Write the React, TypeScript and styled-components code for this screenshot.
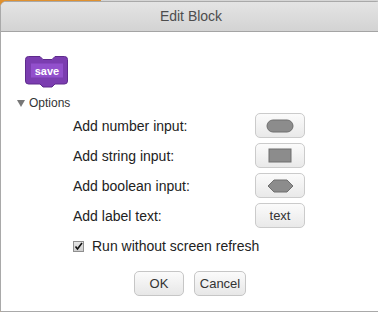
import { FC, Fragment } from "react"
import styled, { createGlobalStyle } from "styled-components"

const GlobalStyle = createGlobalStyle`
  html, body {
    margin: 0;
    padding: 0;
    width: 378px;
    height: 312px;
    overflow: hidden;
    background: linear-gradient(to right, #e0912f 0, #e0912f 101px, #d6d6d6 101px);
    font-family: "Liberation Sans", Arial, sans-serif;
  }
`

const SDialog = styled.div`
  box-sizing: border-box;
  width: 382px;
  height: 311px;
  margin-top: 1px;
  background: #fff;
  border: 1px solid #a9a9a9;
  border-radius: 6px 6px 0 0;
  display: flex;
  flex-direction: column;
  overflow: hidden;
`

const STitle = styled.div`
  height: 30px;
  flex: none;
  display: flex;
  align-items: center;
  justify-content: center;
  background: linear-gradient(#e4e4e4, #d3d3d3);
  border-bottom: 1px solid #a4a4a4;
  color: #4d4d4d;
  font-size: 14px;
  padding-bottom: 2px;
  box-sizing: border-box;
`

const SBody = styled.div`
  flex: 1;
  display: flex;
  flex-direction: column;
  padding: 23px 0 0 23px;
`

const SOptions = styled.div`
  display: flex;
  align-items: center;
  gap: 4px;
  margin: 8px 0 0 -7px;
  font-size: 12px;
  color: #333;
  svg {
    width: 8px;
    height: 7px;
  }
`

const SGrid = styled.div`
  display: grid;
  grid-template-columns: 182px 50px;
  grid-auto-rows: 25px;
  row-gap: 5px;
  align-items: center;
  margin: 3px 0 0 49px;
  font-size: 14px;
  color: #222;
`

const SAddButton = styled.div`
  box-sizing: border-box;
  width: 50px;
  height: 25px;
  border: 1px solid #cbcbcb;
  border-radius: 5px;
  background: linear-gradient(#fbfbfb, #e9e9e9);
  display: flex;
  align-items: center;
  justify-content: center;
  font-size: 13px;
  color: #333;
`

const SCheckRow = styled.label`
  display: flex;
  align-items: center;
  gap: 8px;
  margin: 10px 0 0 49px;
  font-size: 14px;
  color: #222;
`

const SCheckBox = styled.span`
  box-sizing: border-box;
  width: 11px;
  height: 11px;
  border: 1px solid #8f8f8f;
  background: linear-gradient(#e6e6e6, #cfcfcf);
  display: flex;
  align-items: center;
  justify-content: center;
`

const SFooter = styled.div`
  display: flex;
  gap: 10px;
  margin: 17px 0 0 110px;
`

const SButton = styled.div<{ $w: number }>`
  box-sizing: border-box;
  width: ${(p) => p.$w}px;
  height: 25px;
  border: 1px solid #c6c6c6;
  border-radius: 5px;
  background: linear-gradient(#fbfbfb, #e7e7e7);
  display: flex;
  align-items: center;
  justify-content: center;
  font-size: 13px;
  color: #333;
`

const SaveBlock: FC = () => (
  <svg width="46" height="33" viewBox="0 0 46 33">
    <path
      d="M1.5 4.5 Q1.5 1.5 4.5 1.5 H16 L19 4.5 H28 L31 1.5 H40.5 Q43.5 1.5 43.5 4.5 V26 Q43.5 29 40.5 29 H31 L28 32 H19 L16 29 H4.5 Q1.5 29 1.5 26 Z"
      fill="#7b3db0"
      stroke="#5e2b8c"
      strokeWidth="1"
    />
    <rect x="7" y="8.5" width="32" height="14" fill="#9250cc" />
    <text x="23" y="19.5" textAnchor="middle" fill="#fff" fontSize="11" fontWeight="bold" fontFamily="Liberation Sans, Arial, sans-serif">
      save
    </text>
  </svg>
)

const NumberIcon: FC = () => (
  <svg width="28" height="14" viewBox="0 0 28 14">
    <rect x="1" y="1" width="26" height="12" rx="6" fill="#8c8c8c" stroke="#6f6f6f" />
  </svg>
)

const StringIcon: FC = () => (
  <svg width="24" height="15" viewBox="0 0 24 15">
    <rect x="1" y="1" width="22" height="13" fill="#8c8c8c" stroke="#6f6f6f" />
  </svg>
)

const BoolIcon: FC = () => (
  <svg width="27" height="14" viewBox="0 0 27 14">
    <path d="M1 7 L7 1 H20 L26 7 L20 13 H7 Z" fill="#8c8c8c" stroke="#6f6f6f" />
  </svg>
)

const rows = [
  { label: "Add number input:", icon: <NumberIcon /> },
  { label: "Add string input:", icon: <StringIcon /> },
  { label: "Add boolean input:", icon: <BoolIcon /> },
  { label: "Add label text:", icon: "text" },
]

export default function App() {
  return (
    <>
      <GlobalStyle />
      <SDialog>
        <STitle>Edit Block</STitle>
        <SBody>
          <SaveBlock />
          <SOptions>
            <svg viewBox="0 0 8 7">
              <path d="M0 0 H8 L4 7 Z" fill="#777" />
            </svg>
            Options
          </SOptions>
          <SGrid>
            {rows.map((r) => (
              <Fragment key={r.label}>
                <span>{r.label}</span>
                <SAddButton>{r.icon}</SAddButton>
              </Fragment>
            ))}
          </SGrid>
          <SCheckRow>
            <SCheckBox>
              <svg width="9" height="9" viewBox="0 0 9 9">
                <path d="M1.5 4.5 L3.5 7 L8 1" fill="none" stroke="#111" strokeWidth="1.6" />
              </svg>
            </SCheckBox>
            Run without screen refresh
          </SCheckRow>
          <SFooter>
            <SButton $w={50}>OK</SButton>
            <SButton $w={52}>Cancel</SButton>
          </SFooter>
        </SBody>
      </SDialog>
    </>
  )
}
